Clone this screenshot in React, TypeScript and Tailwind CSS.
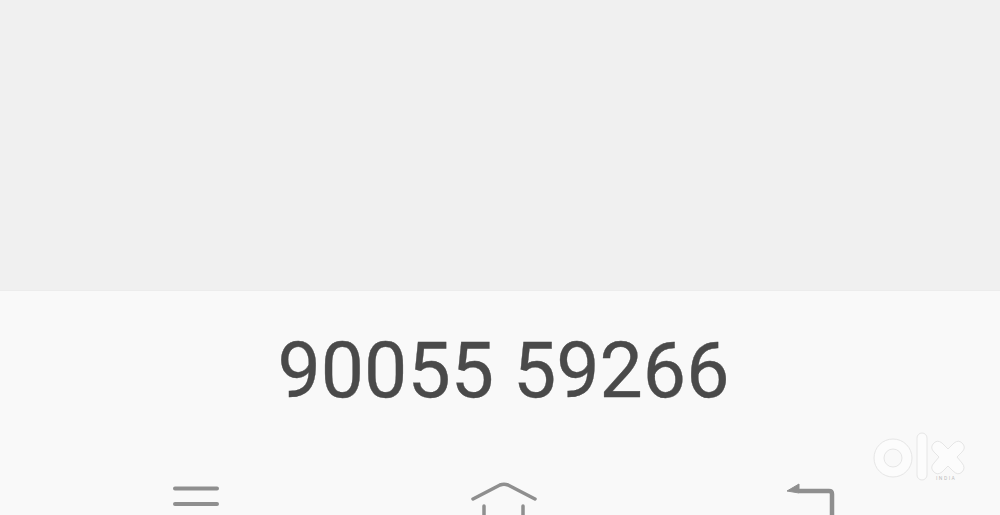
export default function App() {
  return (
    <div className="relative h-[515px] w-[1000px] overflow-hidden bg-[#f9f9f9] font-['Roboto',sans-serif]">
      <div className="h-[291px] border-b border-[#ececec] bg-[#f0f0f0]" />

      <div className="flex h-[160px] items-start justify-center pl-[7px] pt-[34px]">
        <span className="text-[77px] leading-[92px] text-[#4a4a4a] blur-[0.5px] [-webkit-text-stroke:0.35px_#4a4a4a]">90055 59266</span>
      </div>

      <div className="flex items-start pl-[173px] pt-[20px]">
        <svg width="46" height="40" viewBox="0 0 46 40" fill="none" stroke="#8f8f8f" strokeWidth="4" strokeLinecap="round" className="mt-[15px] blur-[0.5px]">
          <path d="M2 2.5H44M2 18H44" />
        </svg>
        <svg width="68" height="64" viewBox="0 0 68 64" fill="none" stroke="#8f8f8f" strokeWidth="3.5" strokeLinecap="round" strokeLinejoin="round" className="ml-[251px] mt-[10px] blur-[0.5px]">
          <path d="M3 18L30 4Q34 2.5 38 4L65 18" />
          <path d="M14 25V60M53 25V60" />
        </svg>
        <svg width="50" height="64" viewBox="0 0 50 64" fill="none" className="ml-[248px] mt-[10px] blur-[0.5px]">
          <path d="M13 10H43Q46 10 46 13V60" stroke="#8f8f8f" strokeWidth="4.5" />
          <path d="M1 10L13 3V12Z" fill="#8f8f8f" stroke="#8f8f8f" strokeLinejoin="round" />
        </svg>
      </div>

      <div className="absolute left-[873px] top-[432px]">
        <svg width="94" height="50" viewBox="0 0 94 50" fill="#fcfcfc" stroke="#e6e6e6" strokeWidth="1">
          <path fillRule="evenodd" d="M20 7a19 19 0 1 0 0 38a19 19 0 1 0 0-38ZM20 17a9 9 0 1 1 0 18a9 9 0 1 1 0-18Z" />
          <rect x="44" y="1" width="10" height="47" rx="5" />
          <path d="M60 12Q64 7 69 11L75 17L81 11Q86 7 90 12Q93 16 89 20L84 25L89 31Q93 36 89 40Q85 44 80 39L75 34L69 40Q64 44 60 39Q57 35 61 31L66 25L61 20Q57 16 60 12Z" />
        </svg>
        <span className="absolute left-[63px] top-[43px] text-[5px] leading-[7px] tracking-[1.5px] text-[#bdbdbd]">INDIA</span>
      </div>
    </div>
  )
}
